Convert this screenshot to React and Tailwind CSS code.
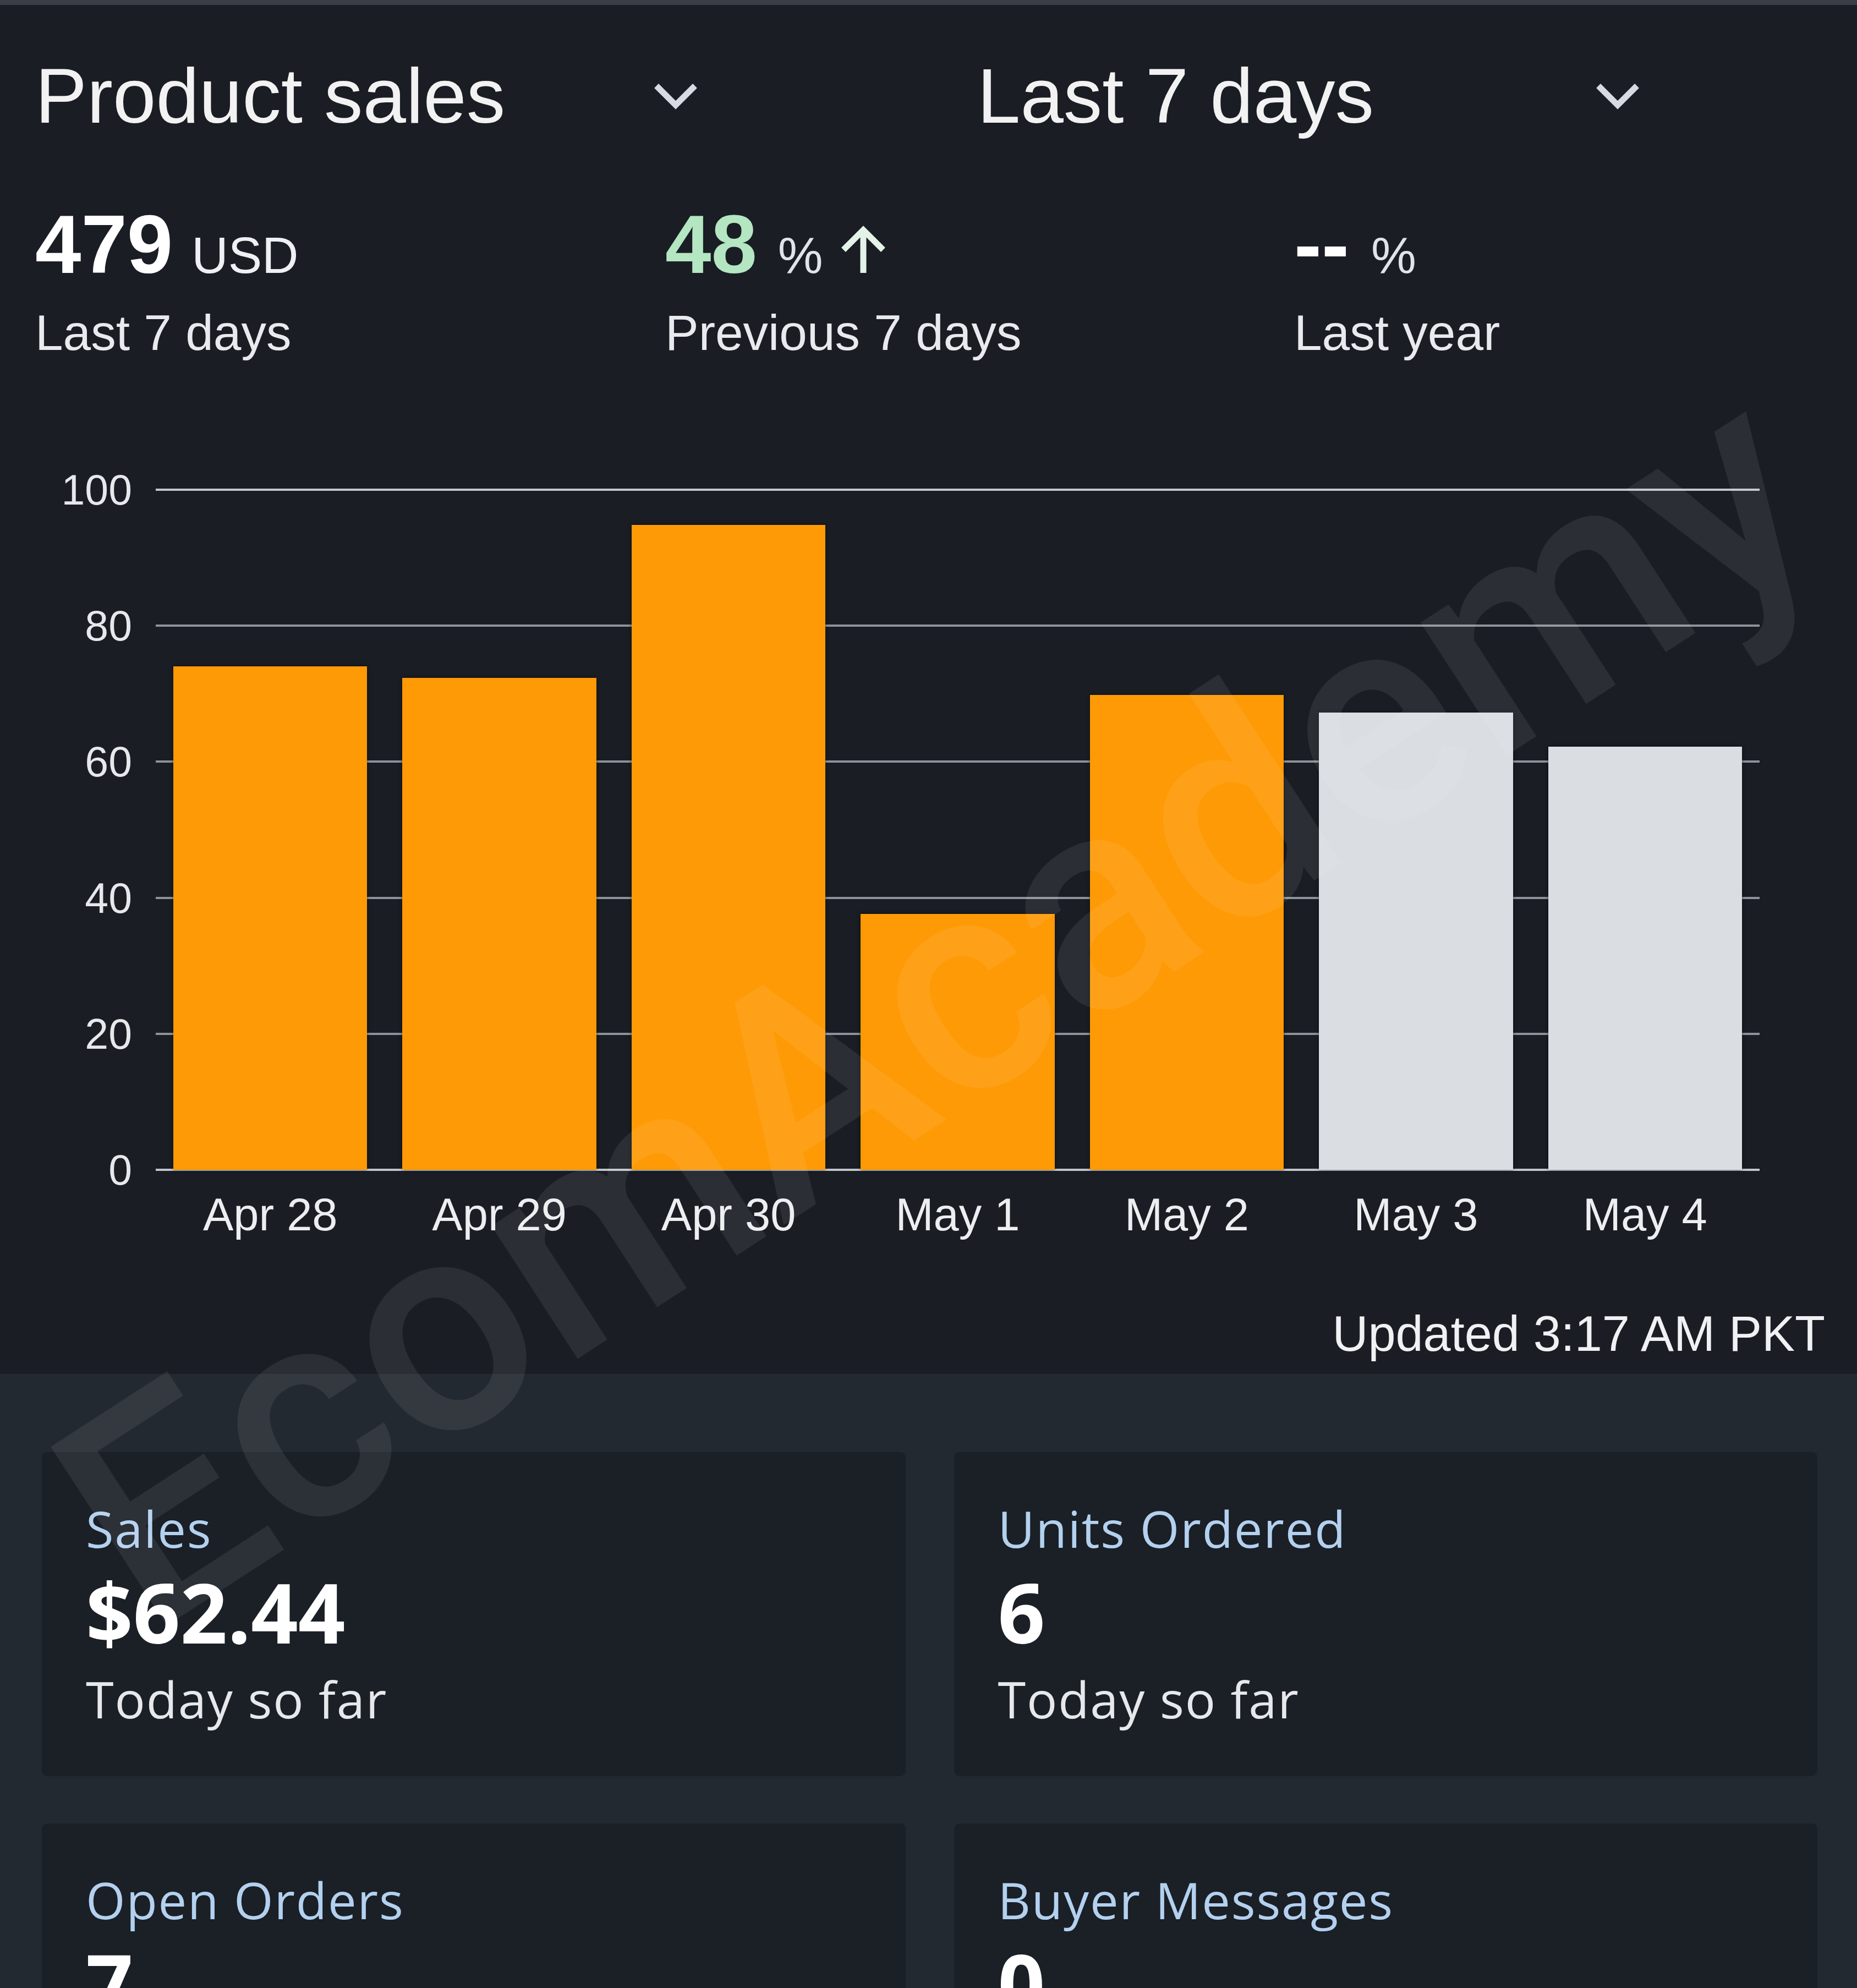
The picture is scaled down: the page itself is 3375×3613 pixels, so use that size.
import React from 'react';

const sales = [
  { day: 'Apr 28', value: 74, projected: false },
  { day: 'Apr 29', value: 72.3, projected: false },
  { day: 'Apr 30', value: 94.8, projected: false },
  { day: 'May 1', value: 37.6, projected: false },
  { day: 'May 2', value: 69.8, projected: false },
  { day: 'May 3', value: 67.2, projected: true },
  { day: 'May 4', value: 62.2, projected: true },
];

const ticks = [100, 80, 60, 40, 20, 0];

const cards = [
  { label: 'Sales', value: '$62.44', note: 'Today so far' },
  { label: 'Units Ordered', value: '6', note: 'Today so far' },
  { label: 'Open Orders', value: '7', note: '' },
  { label: 'Buyer Messages', value: '0', note: '' },
];

const Chevron = () => (
  <svg width="80" height="48" viewBox="0 0 80 48" fill="none">
    <path d="M5 5 L40 40 L75 5" stroke="#d5dae3" strokeWidth="11" />
  </svg>
);

const ArrowUp = () => (
  <svg width="86" height="86" viewBox="0 0 86 86" fill="none" className="ml-[30px]">
    <path d="M43 10 V86 M7 44 L43 8 L79 44" stroke="#e4f3e8" strokeWidth="11" />
  </svg>
);

const Dropdown = ({ label }) => (
  <div className="flex items-center justify-between w-[1204px]">
    <span className="text-[141px] leading-none text-[#f2f2f2]">{label}</span>
    <Chevron />
  </div>
);

const App = () => {
  return (
    <div className="relative w-[3375px] h-[3613px] overflow-hidden bg-[#232930] font-['Liberation_Sans',Arial,sans-serif]">
      {/* Product sales panel */}
      <section className="h-[2497px] bg-[#1a1d24] border-t-[9px] border-[#3a3e46]">
        <div className="flex gap-[508px] pl-[64px] pt-[95px]">
          <Dropdown label="Product sales" />
          <Dropdown label="Last 7 days" />
        </div>

        {/* Summary figures */}
        <div className="flex pl-[64px] mt-[124px]">
          <div className="w-[1145px]">
            <div className="flex items-baseline">
              <span className="text-[150px] font-bold leading-none text-white">479</span>
              <span className="ml-[34px] text-[92px] leading-none text-[#eef0f3]">USD</span>
            </div>
            <div className="mt-[40px] text-[91px] leading-none text-[#e8eaed]">Last 7 days</div>
          </div>
          <div className="w-[1143px]">
            <div className="flex items-baseline">
              <span className="text-[150px] font-bold leading-none text-[#b4e6c1]">48</span>
              <span className="ml-[38px] text-[92px] leading-none text-[#e0e4ea]">%</span>
              <ArrowUp />
            </div>
            <div className="mt-[40px] text-[91px] leading-none text-[#e8eaed]">Previous 7 days</div>
          </div>
          <div className="flex-1">
            <div className="flex items-baseline">
              <span className="text-[150px] font-bold leading-none text-white">--</span>
              <span className="ml-[40px] text-[92px] leading-none text-[#e0e4ea]">%</span>
            </div>
            <div className="mt-[40px] text-[91px] leading-none text-[#e8eaed]">Last year</div>
          </div>
        </div>

        {/* Bar chart */}
        <div className="flex mt-[240px]">
          <div className="relative w-[283px] h-[1236px]">
            {ticks.map((t) => (
              <span
                key={t}
                className="absolute right-[43px] -translate-y-1/2 text-[77px] leading-none text-[#e6e8eb]"
                style={{ top: `${100 - t}%` }}
              >
                {t}
              </span>
            ))}
          </div>
          <div className="relative w-[2915px] h-[1236px]">
            {ticks.map((t) => (
              <div
                key={t}
                className={`absolute left-0 right-0 h-[4px] -translate-y-1/2 ${t === 100 || t === 0 ? 'bg-[#c3c7cd]' : 'bg-[#8e939b]'}`}
                style={{ top: `${100 - t}%` }}
              />
            ))}
            <div className="relative grid grid-cols-7 h-full">
              {sales.map((s) => (
                <div key={s.day} className="flex items-end px-[32px]">
                  <div
                    className={`w-full shadow-[0_0_6px_rgba(0,0,0,0.55)] ${s.projected ? 'bg-[#dadde1]' : 'bg-[#fe9a05]'}`}
                    style={{ height: `${s.value}%` }}
                  />
                </div>
              ))}
            </div>
          </div>
        </div>
        <div className="flex mt-[40px]">
          <div className="w-[283px]" />
          <div className="grid grid-cols-7 w-[2915px]">
            {sales.map((s) => (
              <span key={s.day} className="text-center text-[83px] leading-none text-[#eceef0]">
                {s.day}
              </span>
            ))}
          </div>
        </div>

        <div className="mt-[130px] pr-[58px] text-right text-[90px] leading-none text-[#f0f1f3]">
          Updated 3:17 AM PKT
        </div>
      </section>

      {/* Today cards */}
      <section className="grid grid-cols-2 gap-x-[88px] gap-y-[86px] pl-[76px] pr-[72px] pt-[142px] font-['Open_Sans',sans-serif]">
        {cards.map((c) => (
          <div key={c.label} className="h-[589px] rounded-[10px] bg-[#1b1f26] pl-[80px] pt-[93px]">
            <div className="text-[92px] leading-none tracking-[0.02em] text-[#b3d1ef]">{c.label}</div>
            <div className="mt-[30px] text-[150px] font-bold leading-none text-white">{c.value}</div>
            {c.note && (
              <div className="mt-[38px] text-[92px] leading-none tracking-[0.02em] text-[#e6e8eb]">{c.note}</div>
            )}
          </div>
        ))}
      </section>

      {/* Watermark */}
      <div className="pointer-events-none absolute left-[1700px] top-[1825px] -translate-x-1/2 -translate-y-1/2 -rotate-[33deg] whitespace-nowrap font-['Roboto',sans-serif] text-[545px] font-medium leading-none text-white/[0.08]">
        EcomAcademy
      </div>
    </div>
  );
};

export default App;
